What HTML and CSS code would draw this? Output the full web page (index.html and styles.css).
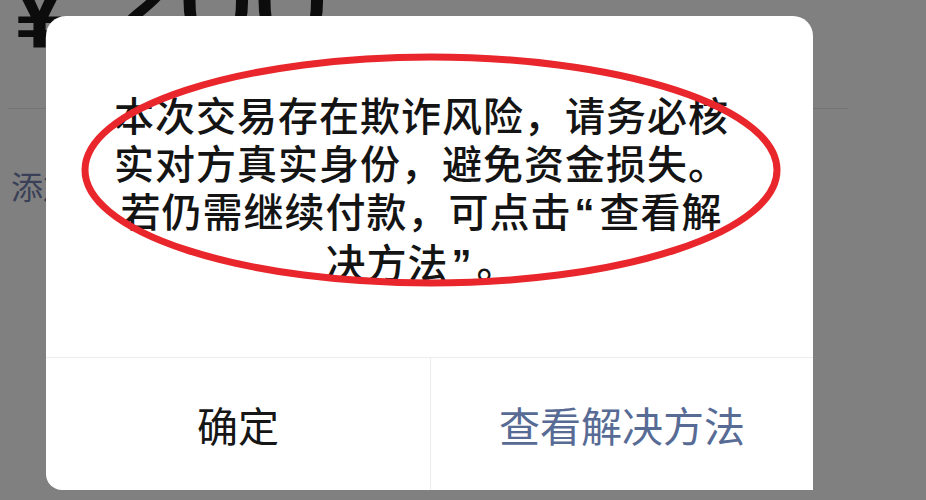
FILE: index.html
```html
<!DOCTYPE html>
<html lang="zh-CN">
<head>
<meta charset="utf-8">
<title>转账</title>
<link rel="stylesheet" href="styles.css">
</head>
<body>
<div class="page">
  <div class="amount">
    <span class="currency">¥</span>
    <span class="value">200</span>
  </div>
  <div class="divider"></div>
  <div class="note">添加转账说明</div>
</div>

<div class="dialog">
  <div class="dialog-body">
    本次交易存在欺诈风险，请务必核<br>
    实对方真实身份，避免资金损失。<br>
    若仍需继续付款，可点击<span class="q">“</span>查看解<br>
    决方法<span class="q">”</span>。
  </div>
  <div class="dialog-actions">
    <div class="btn btn-ok">确定</div>
    <div class="btn btn-link">查看解决方法</div>
  </div>
</div>

<svg class="mark" width="926" height="500" viewBox="0 0 926 500" xmlns="http://www.w3.org/2000/svg">
  <ellipse cx="431" cy="170" rx="346" ry="113" fill="none" stroke="#e8262b" stroke-width="7"/>
</svg>
</body>
</html>
```

FILE: styles.css
```css
html, body {
  margin: 0;
  padding: 0;
}
body {
  width: 926px;
  height: 500px;
  overflow: hidden;
  background: #808080;
  font-family: "Noto Sans CJK SC", "Noto Sans", sans-serif;
  position: relative;
}
.page {
  display: flex;
  flex-direction: column;
}
.amount {
  display: flex;
  align-items: baseline;
  margin-top: -66px;
  height: 135px;
  line-height: 1;
  font-family: "Liberation Sans", Arial, sans-serif;
  color: #0c0c0c;
}
.currency {
  font-size: 92px;
  font-weight: bold;
  margin-left: 14px;
}
.value {
  font-size: 135px;
  margin-left: 38px;
}
.divider {
  margin: 39px 0 0 8px;
  width: 840px;
  height: 1px;
  background: #747474;
}
.note {
  margin: 60px 0 0 11px;
  font-size: 32px;
  line-height: 32px;
  color: #394057;
  white-space: nowrap;
}
.dialog {
  position: absolute;
  left: 46px;
  top: 16px;
  width: 767px;
  height: 474px;
  background: #ffffff;
  border-radius: 20px 20px 0 16px;
  display: flex;
  flex-direction: column;
  overflow: hidden;
}
.dialog-body {
  height: 341px;
  box-sizing: border-box;
  padding: 74px 16px 0 0;
  text-align: center;
  font-size: 40px;
  line-height: 48px;
  letter-spacing: 1px;
  color: #141414;
  font-weight: 500;
  white-space: nowrap;
}
.q {
  font-family: "Liberation Sans", Arial, sans-serif;
  font-weight: bold;
  padding-left: 3px;
  letter-spacing: 5px;
}
.dialog-actions {
  flex: 1;
  display: flex;
  border-top: 1px solid #ececec;
}
.btn {
  display: flex;
  align-items: center;
  justify-content: center;
  font-size: 41px;
}
.btn-ok {
  width: 384px;
  border-right: 1px solid #ececec;
  color: #161616;
}
.btn-link {
  flex: 1;
  color: #576b95;
}
.mark {
  position: absolute;
  left: 0;
  top: 0;
  pointer-events: none;
}
```
